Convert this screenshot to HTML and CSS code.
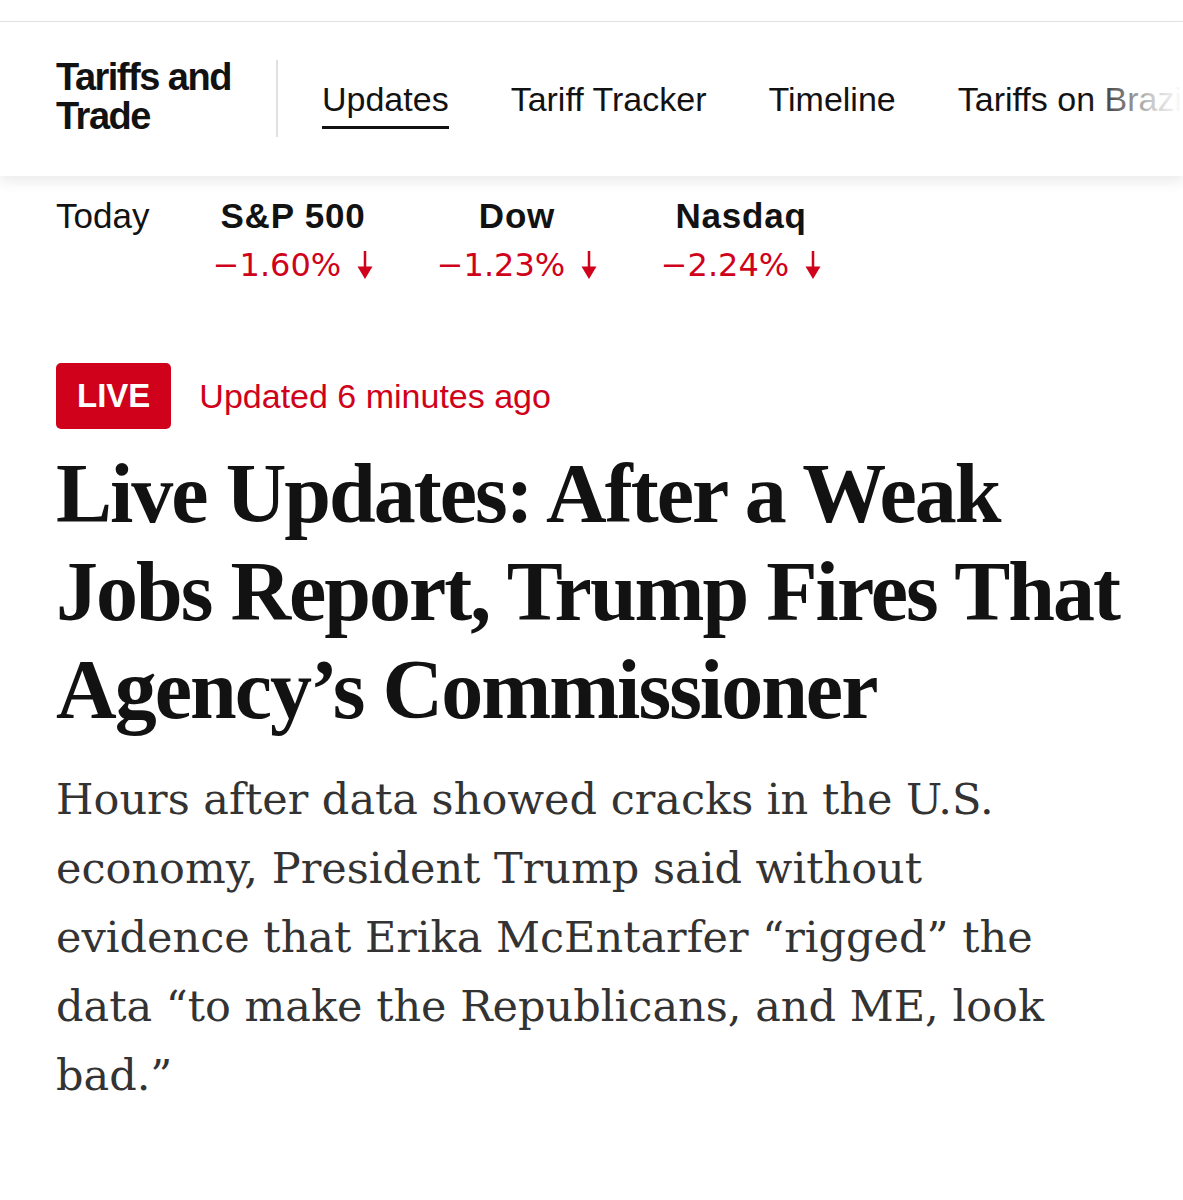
FILE: index.html
```html
<!DOCTYPE html>
<html lang="en">
<head>
<meta charset="utf-8">
<title>Tariffs and Trade — Live Updates</title>
<link rel="stylesheet" href="styles.css">
</head>
<body>
<div class="top-strip"></div>
<nav class="section-nav">
  <div class="brand">Tariffs and Trade</div>
  <div class="divider"></div>
  <ul class="links">
    <li><a class="link active" href="#">Updates</a></li>
    <li><a class="link" href="#">Tariff Tracker</a></li>
    <li><a class="link" href="#">Timeline</a></li>
    <li><a class="link" href="#">Tariffs on Brazil</a></li>
  </ul>
</nav>

<section class="markets">
  <div class="today">Today</div>
  <div class="market">
    <div class="m-name">S&amp;P 500</div>
    <div class="m-value">−1.60%<svg class="arrow" width="16" height="28" viewBox="0 0 16 28"><rect x="6.75" y="0" width="2.5" height="17"/><polygon points="0.5,15.5 15.5,15.5 8,28"/></svg></div>
  </div>
  <div class="market">
    <div class="m-name">Dow</div>
    <div class="m-value">−1.23%<svg class="arrow" width="16" height="28" viewBox="0 0 16 28"><rect x="6.75" y="0" width="2.5" height="17"/><polygon points="0.5,15.5 15.5,15.5 8,28"/></svg></div>
  </div>
  <div class="market">
    <div class="m-name">Nasdaq</div>
    <div class="m-value">−2.24%<svg class="arrow" width="16" height="28" viewBox="0 0 16 28"><rect x="6.75" y="0" width="2.5" height="17"/><polygon points="0.5,15.5 15.5,15.5 8,28"/></svg></div>
  </div>
</section>

<main class="article">
  <div class="live-row">
    <span class="live-badge">LIVE</span>
    <span class="updated">Updated 6 minutes ago</span>
  </div>
  <h1 class="headline">Live Updates: After a Weak Jobs Report, Trump Fires That Agency’s Commissioner</h1>
  <p class="summary">Hours after data showed cracks in the U.S. economy, President Trump said without evidence that Erika McEntarfer “rigged” the data “to make the Republicans, and ME, look bad.”</p>
</main>
</body>
</html>
```
FILE: styles.css
```css
* { box-sizing: border-box; }

html, body {
  margin: 0;
  padding: 0;
  background: #fff;
}

body {
  font-family: "Liberation Sans", Arial, sans-serif;
  color: #121212;
}

.top-strip {
  height: 22px;
  border-bottom: 1px solid #e4e4e4;
  background: #fff;
}

.section-nav {
  position: relative;
  display: flex;
  align-items: center;
  height: 154px;
  padding-left: 56px;
  background: #fff;
  overflow: hidden;
  white-space: nowrap;
  box-shadow: 0 6px 12px rgba(0, 0, 0, 0.08);
  z-index: 1;
}

.section-nav::after {
  content: "";
  position: absolute;
  top: 0;
  right: 0;
  width: 95px;
  height: 100%;
  background: linear-gradient(to right, rgba(255, 255, 255, 0) 0%, rgba(255, 255, 255, 0.8) 70%, #fff 100%);
}

.brand {
  width: 185px;
  flex: none;
  white-space: normal;
  font-weight: 700;
  font-size: 38px;
  line-height: 39px;
  letter-spacing: -1.5px;
  margin-top: -4px;
}

.divider {
  flex: none;
  width: 2px;
  height: 77px;
  background: #e0e0e0;
  margin-left: 35px;
  margin-top: -2px;
}

.links {
  display: flex;
  gap: 62px;
  list-style: none;
  margin: 0 0 0 44px;
  padding: 0;
}

.link {
  display: block;
  font-size: 34px;
  line-height: 40px;
  color: #121212;
  text-decoration: none;
  padding: 10px 0 7px;
  border-bottom: 3px solid transparent;
}

.link.active {
  border-bottom-color: #121212;
}

.markets {
  display: flex;
  padding: 20px 0 0 56px;
}

.today {
  width: 137px;
  flex: none;
  font-size: 35px;
  line-height: 40px;
  color: #121212;
}

.market {
  width: 200px;
  margin-right: 24px;
  text-align: center;
}

.m-name {
  font-weight: 700;
  font-size: 35px;
  line-height: 40px;
  letter-spacing: 0.8px;
  color: #121212;
}

.m-value {
  margin-top: 5px;
  font-family: "DejaVu Sans", sans-serif;
  font-size: 32px;
  line-height: 48px;
  color: #d0021b;
  white-space: nowrap;
}

.arrow {
  fill: #d0021b;
  margin-left: 16px;
  vertical-align: -3px;
}

.article {
  padding: 74px 0 60px 56px;
}

.live-row {
  display: flex;
  align-items: center;
  gap: 28px;
}

.live-badge {
  display: block;
  height: 66px;
  padding: 0 21px;
  background: #d0021b;
  color: #fff;
  border-radius: 5px;
  font-weight: 700;
  font-size: 33px;
  line-height: 66px;
}

.updated {
  font-size: 34px;
  line-height: 40px;
  color: #d0021b;
}

.headline {
  max-width: 1100px;
  margin: 16px 0 0;
  font-family: "Liberation Serif", "Times New Roman", serif;
  font-weight: 700;
  font-size: 84px;
  line-height: 98px;
  letter-spacing: -2px;
  color: #121212;
}

.summary {
  max-width: 1040px;
  margin: 26px 0 0;
  font-family: "DejaVu Serif", Georgia, serif;
  font-size: 43px;
  line-height: 69px;
  color: #333;
}
```
